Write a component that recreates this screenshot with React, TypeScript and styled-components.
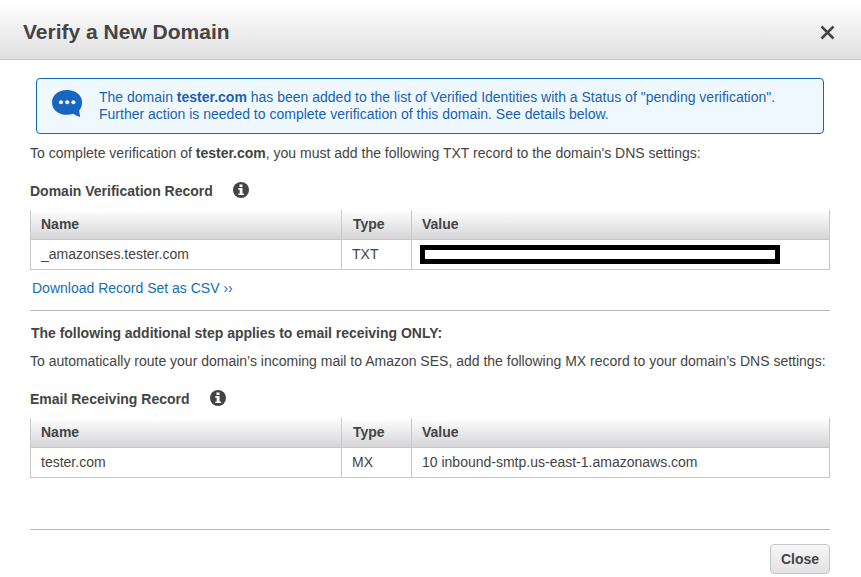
import React from "react";
import styled, { createGlobalStyle } from "styled-components";

const GlobalStyle = createGlobalStyle`
  * { box-sizing: border-box; }
  body {
    margin: 0;
    background: #fff;
    color: #444;
    font: 14px/17px "Liberation Sans", Arial, sans-serif;
  }
`;

const Dialog = styled.div`
  width: 861px;
  height: 577px;
  overflow: hidden;
`;

const Header = styled.header`
  display: flex;
  align-items: center;
  justify-content: space-between;
  height: 60px;
  padding: 4px 26px 0 23px;
  background: linear-gradient(#fff 5%, #dfdfdf);
  border-bottom: 1px solid #c4c4c4;
`;

const Title = styled.h1`
  margin: 0;
  font-size: 21px;
  line-height: 24px;
`;

const IconButton = styled.button`
  display: flex;
  margin: 2px 0 0;
  padding: 0;
  border: 0;
  background: none;
`;

const Body = styled.main`
  display: flex;
  flex-direction: column;
  padding: 18px 31px 0 30px;
`;

const Alert = styled.section`
  display: flex;
  height: 56px;
  margin: 0 6px;
  padding: 10px 15px;
  border: 1px solid #0f6ab4;
  border-radius: 4px;
  background: #f0f8ff;
  color: #1862b5;
`;

const AlertIcon = styled.svg`
  flex: none;
  width: 31px;
  height: 29px;
  margin-right: 16px;
`;

const AlertText = styled.p`
  margin: 0;
  white-space: nowrap;
`;

const Line = styled.span`
  display: block;
`;

const Paragraph = styled.p<{ $top: number }>`
  height: 17px;
  margin: ${({ $top }) => $top}px 0 0;
  white-space: nowrap;
`;

const SectionTitle = styled.h2`
  display: flex;
  align-items: center;
  gap: 20px;
  height: 17px;
  margin: 21px 0 10px;
  font-size: 14px;
`;

const StepTitle = styled.h2`
  height: 17px;
  margin: 14px 0 0 1px;
  font-size: 14px;
  letter-spacing: -0.02px;
`;

const Table = styled.div`
  border: 1px solid #c8c8c8;
  border-top: 0;
`;

const Cell = styled.div`
  display: flex;
  align-items: center;
  padding: 0 10px;

  & + & { border-left: 1px solid #c8c8c8; }
`;

const Row = styled.div<{ $head?: boolean }>`
  display: grid;
  grid-template-columns: 310px 70px 1fr;
  height: ${({ $head }) => ($head ? 30 : 29)}px;
  font-weight: ${({ $head }) => ($head ? 700 : 400)};
  background: ${({ $head }) => ($head ? "linear-gradient(#fff, #d5d5d7)" : "#fff")};
  border-bottom: ${({ $head }) => ($head ? "1px solid #c8c8c8" : "0")};

  ${Cell}:nth-child(2) { padding-left: ${({ $head }) => ($head ? 11 : 10)}px; }
`;

const Redacted = styled.span`
  width: 360px;
  height: 19px;
  margin: 0 0 1px -2px;
  border: 5px solid #000;
  background: #fff;
`;

const Download = styled.a`
  height: 17px;
  margin: 10px 0 0 2px;
  color: #146eb4;
`;

const Rule = styled.hr<{ $top: number }>`
  width: 100%;
  height: 1px;
  margin: ${({ $top }) => $top}px 0 0;
  border: 0;
  background: #b8b8b8;
`;

const Footer = styled.footer`
  display: flex;
  justify-content: flex-end;
  padding-top: 14px;
`;

const CloseButton = styled.button`
  width: 60px;
  height: 30px;
  padding: 0;
  border: 1px solid #c6c6c6;
  border-radius: 4px;
  background: linear-gradient(#f6f6f6, #e3e3e3);
  color: #444;
  font: bold 14px/17px "Liberation Sans", Arial, sans-serif;
`;

const InfoGlyph = styled.svg`
  width: 16px;
  height: 16px;
  margin-bottom: 3px;
`;

const InfoIcon = () => (
  <InfoGlyph viewBox="0 0 16 16" aria-hidden="true">
    <circle cx="8" cy="8" r="8" fill="#444" />
    <path fill="#fff" d="M6.500 2.500h3v2.500h-3zM5.300 6.100h4.200v5.300h1.400V13.100H5.300v-1.700h1.400V7.800H5.300z" />
  </InfoGlyph>
);

type RecordTableProps = { name: string; type: string; value: React.ReactNode };

const RecordTable = ({ name, type, value }: RecordTableProps) => (
  <Table>
    <Row $head>
      <Cell>Name</Cell>
      <Cell>Type</Cell>
      <Cell>Value</Cell>
    </Row>
    <Row>
      <Cell>{name}</Cell>
      <Cell>{type}</Cell>
      <Cell>{value}</Cell>
    </Row>
  </Table>
);

export default function App() {
  return (
    <>
      <GlobalStyle />
      <Dialog>
        <Header>
          <Title>Verify a New Domain</Title>
          <IconButton aria-label="Close dialog">
            <svg width="15" height="15" viewBox="0 0 15 15">
              <path d="M1.500 1.500 13.500 13.500M13.500 1.500 1.500 13.500" stroke="#444" strokeWidth="2.500" />
            </svg>
          </IconButton>
        </Header>
        <Body>
          <Alert>
            <AlertIcon viewBox="0 0 31 29" aria-hidden="true">
              <path
                fill="#1766c0"
                d="M15 1C6.400 1 0 6.200 0 13.400s6.400 12.400 15 12.400c2.300 0 4.400-.4 6.300-1.100 2.100 1.500 4.300 2.600 6.800 3.300l-.9-6.500c1.800-2.200 2.900-4.900 2.900-8.100C30.100 6.200 23.600 1 15 1z"
              />
              <circle cx="9" cy="13.300" r="2.050" fill="#fff" />
              <circle cx="15.200" cy="13.300" r="2.050" fill="#fff" />
              <circle cx="21.400" cy="13.300" r="2.050" fill="#fff" />
            </AlertIcon>
            <AlertText>
              <Line>
                The domain <b>tester.com</b> has been added to the list of Verified Identities with a Status of "pending
                verification".
              </Line>
              <Line>Further action is needed to complete verification of this domain. See details below.</Line>
            </AlertText>
          </Alert>
          <Paragraph $top={11}>
            To complete verification of <b>tester.com</b>, you must add the following TXT record to the domain's DNS
            settings:
          </Paragraph>
          <SectionTitle>
            Domain Verification Record <InfoIcon />
          </SectionTitle>
          <RecordTable name="_amazonses.tester.com" type="TXT" value={<Redacted />} />
          <Download>Download Record Set as CSV ››</Download>
          <Rule $top={13} />
          <StepTitle>The following additional step applies to email receiving ONLY:</StepTitle>
          <Paragraph $top={11}>
            To automatically route your domain’s incoming mail to Amazon SES, add the following MX record to your
            domain’s DNS settings:
          </Paragraph>
          <SectionTitle>
            Email Receiving Record <InfoIcon />
          </SectionTitle>
          <RecordTable name="tester.com" type="MX" value="10 inbound-smtp.us-east-1.amazonaws.com" />
          <Rule $top={51} />
          <Footer>
            <CloseButton>Close</CloseButton>
          </Footer>
        </Body>
      </Dialog>
    </>
  );
}
